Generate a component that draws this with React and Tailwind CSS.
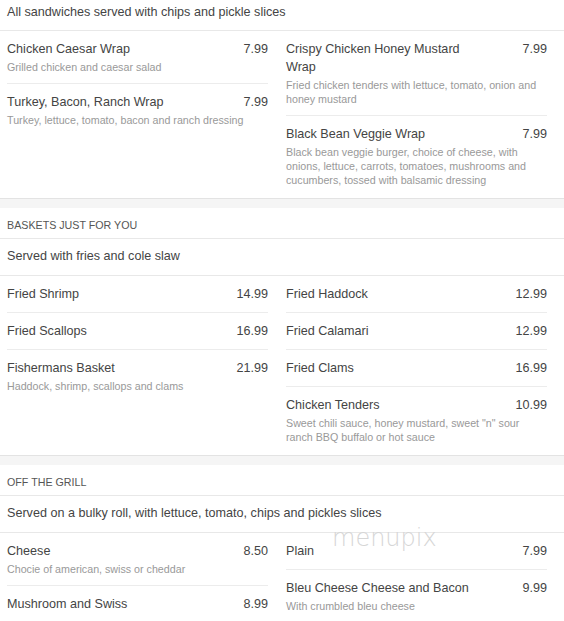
import React from "react";

const sections = [
  {
    header: null,
    sub: "All sandwiches served with chips and pickle slices",
    left: [
      { name: "Chicken Caesar Wrap", price: "7.99", desc: "Grilled chicken and caesar salad" },
      { name: "Turkey, Bacon, Ranch Wrap", price: "7.99", desc: "Turkey, lettuce, tomato, bacon and ranch dressing" },
    ],
    right: [
      { name: "Crispy Chicken Honey Mustard Wrap", price: "7.99", desc: "Fried chicken tenders with lettuce, tomato, onion and honey mustard" },
      { name: "Black Bean Veggie Wrap", price: "7.99", desc: "Black bean veggie burger, choice of cheese, with onions, lettuce, carrots, tomatoes, mushrooms and cucumbers, tossed with balsamic dressing" },
    ],
  },
  {
    header: "BASKETS JUST FOR YOU",
    sub: "Served with fries and cole slaw",
    left: [
      { name: "Fried Shrimp", price: "14.99" },
      { name: "Fried Scallops", price: "16.99" },
      { name: "Fishermans Basket", price: "21.99", desc: "Haddock, shrimp, scallops and clams" },
    ],
    right: [
      { name: "Fried Haddock", price: "12.99" },
      { name: "Fried Calamari", price: "12.99" },
      { name: "Fried Clams", price: "16.99" },
      { name: "Chicken Tenders", price: "10.99", desc: "Sweet chili sauce, honey mustard, sweet \"n\" sour ranch BBQ buffalo or hot sauce" },
    ],
  },
  {
    header: "OFF THE GRILL",
    sub: "Served on a bulky roll, with lettuce, tomato, chips and pickles slices",
    left: [
      { name: "Cheese", price: "8.50", desc: "Chocie of american, swiss or cheddar" },
      { name: "Mushroom and Swiss", price: "8.99" },
    ],
    right: [
      { name: "Plain", price: "7.99" },
      { name: "Bleu Cheese Cheese and Bacon", price: "9.99", desc: "With crumbled bleu cheese" },
    ],
  },
];

function Item({ item, last }) {
  return (
    <div className={"pt-[9px] pb-[9px] " + (last ? "" : "border-b border-[#ececec]")}>
      <div className="flex items-start justify-between text-[12.6px] leading-[18px] text-[#444]">
        <div className="max-w-[200px]">{item.name}</div>
        <div className="text-right">{item.price}</div>
      </div>
      {item.desc && (
        <div className="mt-[2px] text-[10.7px] leading-[14px] text-[#999]">{item.desc}</div>
      )}
    </div>
  );
}

function Column({ items }) {
  return (
    <div className="w-[261px] flex flex-col">
      {items.map((it, i) => (
        <Item key={i} item={it} last={i === items.length - 1} />
      ))}
    </div>
  );
}

export default function App() {
  return (
    <div className="relative w-[564px] h-[621px] overflow-hidden bg-white font-['Liberation_Sans',Arial,sans-serif]">
      {sections.map((s, idx) => (
        <div key={idx}>
          {s.header && (
            <>
              <div className="h-[10px] border-t border-[#e3e3e3] bg-[#f5f5f5]" />
              <div className="pl-[7px] pt-[10px] pb-[6px] text-[10.7px] leading-[14px] text-[#555] border-b border-[#e8e8e8]">
                {s.header}
              </div>
            </>
          )}
          <div
            className={
              "pl-[7px] text-[12.6px] leading-[18px] text-[#444] border-b border-[#e8e8e8] " +
              (s.header ? "pt-[8px] pb-[10px]" : "pt-[3px] pb-[9px]")
            }
          >
            {s.sub}
          </div>
          <div className="flex pl-[7px] gap-[18px] pb-[2px]">
            <Column items={s.left} />
            <Column items={s.right} />
          </div>
        </div>
      ))}
      <div className="absolute left-[332px] top-[524px] text-[24px] leading-[28px] text-[#d6d6d6] font-['DejaVu_Sans',sans-serif] font-extralight">
        menupix
      </div>
    </div>
  );
}
